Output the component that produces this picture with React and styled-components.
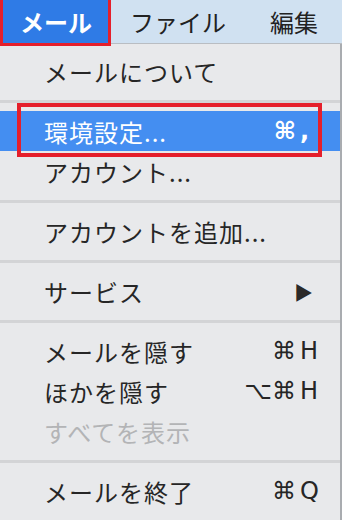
import React from 'react';
import styled, { createGlobalStyle } from 'styled-components';

const GlobalStyle = createGlobalStyle`
body{
    margin:0;
    background:#e8e9eb;
    font-family:"Noto Sans CJK JP","Noto Sans",sans-serif;
}
`;

const Screen = styled.div`
width:342px;
height:520px;
overflow:hidden;
background:#e8e9eb;
`;

const MenuBar = styled.div`
display:flex;
align-items:stretch;
height:43px;
background:#d0e1f1;
border-bottom:1px solid #b9bdc2;
`;

const MenuTitle = styled.div`
display:flex;
align-items:center;
flex-shrink:0;
white-space:nowrap;
padding:${props => props.$active ? '0 16px 0 17px' : '0 22px'};
margin-left:${props => props.$active ? '3px' : '0'};
font-size:24px;
font-weight:${props => props.$active ? 700 : 400};
color:${props => props.$active ? '#ffffff' : '#222'};
background:${props => props.$active ? '#2f7be6' : 'transparent'};
box-shadow:${props => props.$active ? '0 0 0 3px #e51f2b' : 'none'};
position:relative;
z-index:1;
`;

const Menu = styled.div`
padding-top:7px;
border-right:2px solid #a9acb0;
height:100%;
`;

const Item = styled.div`
position:relative;
display:flex;
align-items:center;
justify-content:space-between;
height:40px;
padding:0 20px 0 44px;
font-size:24px;
letter-spacing:1px;
white-space:nowrap;
color:${props => props.$disabled ? '#b3b4b6' : props.$selected ? '#ffffff' : '#262626'};
background:${props => props.$selected ? '#448ef1' : 'transparent'};
${props => props.$marked && `
&::after{
    content:"";
    position:absolute;
    left:17px;
    right:18px;
    top:-8px;
    bottom:-6px;
    border:4px solid #e51f2b;
}
`}
`;

const Shortcut = styled.span`
display:flex;
align-items:center;
gap:4px;
font-family:"DejaVu Sans","Noto Sans",sans-serif;
font-size:24px;
letter-spacing:0;
font-weight:${props => props.$bold ? 700 : 400};
`;

const Key = styled.span`
width:20px;
text-align:left;
`;

const Arrow = styled.span`
font-size:19px;
margin-right:6px;
color:#2a2a2a;
`;

const Separator = styled.div`
height:20px;
display:flex;
align-items:center;
&::before{
    content:"";
    flex:1;
    height:3px;
    background:#d3d4d6;
}
`;

const App = () => {
    return(
        <Screen>
            <GlobalStyle/>
            <MenuBar>
                <MenuTitle $active>メール</MenuTitle>
                <MenuTitle>ファイル</MenuTitle>
                <MenuTitle>編集</MenuTitle>
            </MenuBar>
            <Menu>
                <Item>メールについて</Item>
                <Separator/>
                <Item $selected $marked>環境設定...<Shortcut $bold>⌘<Key>,</Key></Shortcut></Item>
                <Item>アカウント...</Item>
                <Separator/>
                <Item>アカウントを追加...</Item>
                <Separator/>
                <Item>サービス<Arrow>▶</Arrow></Item>
                <Separator/>
                <Item>メールを隠す<Shortcut>⌘<Key>H</Key></Shortcut></Item>
                <Item>ほかを隠す<Shortcut>⌥⌘<Key>H</Key></Shortcut></Item>
                <Item $disabled>すべてを表示</Item>
                <Separator/>
                <Item>メールを終了<Shortcut>⌘<Key>Q</Key></Shortcut></Item>
            </Menu>
        </Screen>
    )
};
export default App;
